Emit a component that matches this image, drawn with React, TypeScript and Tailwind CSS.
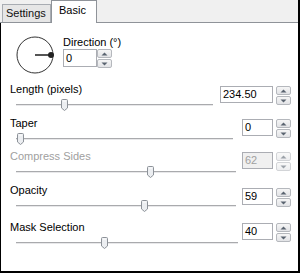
import React from 'react';

const font = { fontFamily: '"Liberation Sans", Arial, sans-serif' };

function Arrow({ up }: { up: boolean }) {
  return (
    <svg width="7" height="4" viewBox="0 0 7 4">
      {up ? <path d="M0.5 3.5 L3.5 0.5 L6.5 3.5 Z" fill="#5a6470" /> : <path d="M0.5 0.5 L3.5 3.5 L6.5 0.5 Z" fill="#5a6470" />}
    </svg>
  );
}

function Spinner({ disabled }: { disabled?: boolean }) {
  return (
    <div className={`flex flex-col w-[15px] h-[19px] gap-[1px] ${disabled ? 'opacity-60' : ''}`}>
      <div className="flex-1 flex items-center justify-center border border-[#b5b8bd] rounded-[2px] bg-gradient-to-b from-[#f6f6f6] to-[#e2e3e6]">
        <Arrow up />
      </div>
      <div className="flex-1 flex items-center justify-center border border-[#b5b8bd] rounded-[2px] bg-gradient-to-b from-[#f6f6f6] to-[#e2e3e6]">
        <Arrow up={false} />
      </div>
    </div>
  );
}

function Thumb() {
  return (
    <svg width="7" height="12" viewBox="0 0 7 12">
      <path d="M0.5 1.5 Q0.5 0.5 1.5 0.5 L5.5 0.5 Q6.5 0.5 6.5 1.5 L6.5 9 L3.5 11.5 L0.5 9 Z" fill="#eceef1" stroke="#8d9299" />
      <path d="M2 2 L5 2" stroke="#ffffff" />
    </svg>
  );
}

function Slider({ width, thumb }: { width: number; thumb: number }) {
  return (
    <div className="relative h-[12px] ml-[6px]" style={{ width }}>
      <div className="absolute left-0 right-0 top-[5px] h-[2px] border-t border-[#a9aaad] bg-[#e8e8ea]" />
      <div className="absolute top-0" style={{ left: thumb }}>
        <Thumb />
      </div>
    </div>
  );
}

type Row = {
  label: string;
  value: string;
  wide?: boolean;
  disabled?: boolean;
  track: number;
  thumb: number;
  top: number;
  mt: number;
};

const rows: Row[] = [
  { label: 'Length (pixels)', value: '234.50', wide: true, track: 197, thumb: 45, top: 8, mt: 4 },
  { label: 'Taper', value: '0', track: 217, thumb: 1, top: 0, mt: 3 },
  { label: 'Compress Sides', value: '62', disabled: true, track: 220, thumb: 131, top: -1, mt: 3 },
  { label: 'Opacity', value: '59', track: 220, thumb: 125, top: 0, mt: 5 },
  { label: 'Mask Selection', value: '40', track: 222, thumb: 85, top: 3, mt: 3 },
];

export default function App() {
  return (
    <div className="w-[300px] h-[273px] bg-[#f0f0f0] border-r-2 border-black flex flex-col text-[11px] text-black" style={font}>
      {/* tab strip */}
      <div className="h-[23px] flex items-end pl-[2px] border-b border-[#8f9399] shrink-0">
        <div className="h-[18px] w-[49px] px-[3px] border border-b-0 border-[#a8acb2] bg-[#e6e6e6] leading-[17px] text-[#111]">Settings</div>
        <div className="h-[23px] w-[46px] -mb-[1px] px-[7px] border border-b-0 border-[#8f9399] bg-white leading-[18px]">Basic</div>
      </div>

      {/* page */}
      <div className="flex-1 bg-white border-l border-b-2 border-black">
        <div className="flex items-start pl-[15px] pt-[12px]">
          <svg width="38" height="38" viewBox="0 0 38 38" className="mt-[1px]">
            <circle cx="19" cy="19" r="18" fill="none" stroke="#333" strokeWidth="1" />
            <line x1="19" y1="19" x2="35" y2="19" stroke="#555" strokeWidth="2" />
            <circle cx="35" cy="19" r="3" fill="#222" />
          </svg>
          <div className="ml-[9px]">
            <div className="leading-[14px]">Direction (°)</div>
            <div className="flex">
              <div className="w-[34px] h-[18px] border border-[#abadb3] leading-[16px] pl-[2px]">0</div>
              <Spinner />
            </div>
          </div>
        </div>

        {rows.map((r) => (
          <div key={r.label} className="flex items-start pl-[9px] pr-[7px]" style={{ marginTop: r.top }}>
            <div className="flex-1">
              <div className={`leading-[14px] ${r.disabled ? 'text-[#a0a0a0]' : ''}`}>{r.label}</div>
              <div className="mt-[3px] h-[17px]">
                <Slider width={r.track} thumb={r.thumb} />
              </div>
            </div>
            <div className="flex items-start gap-[3px]" style={{ marginTop: r.mt }}>
              <div
                className={`h-[17px] border border-[#abadb3] leading-[15px] pl-[2px] ${r.wide ? 'w-[53px]' : 'w-[31px]'} ${r.disabled ? 'bg-[#f0f0f0] text-[#a0a0a0]' : 'bg-white'}`}
              >
                {r.value}
              </div>
              <Spinner disabled={r.disabled} />
            </div>
          </div>
        ))}
      </div>
    </div>
  );
}
